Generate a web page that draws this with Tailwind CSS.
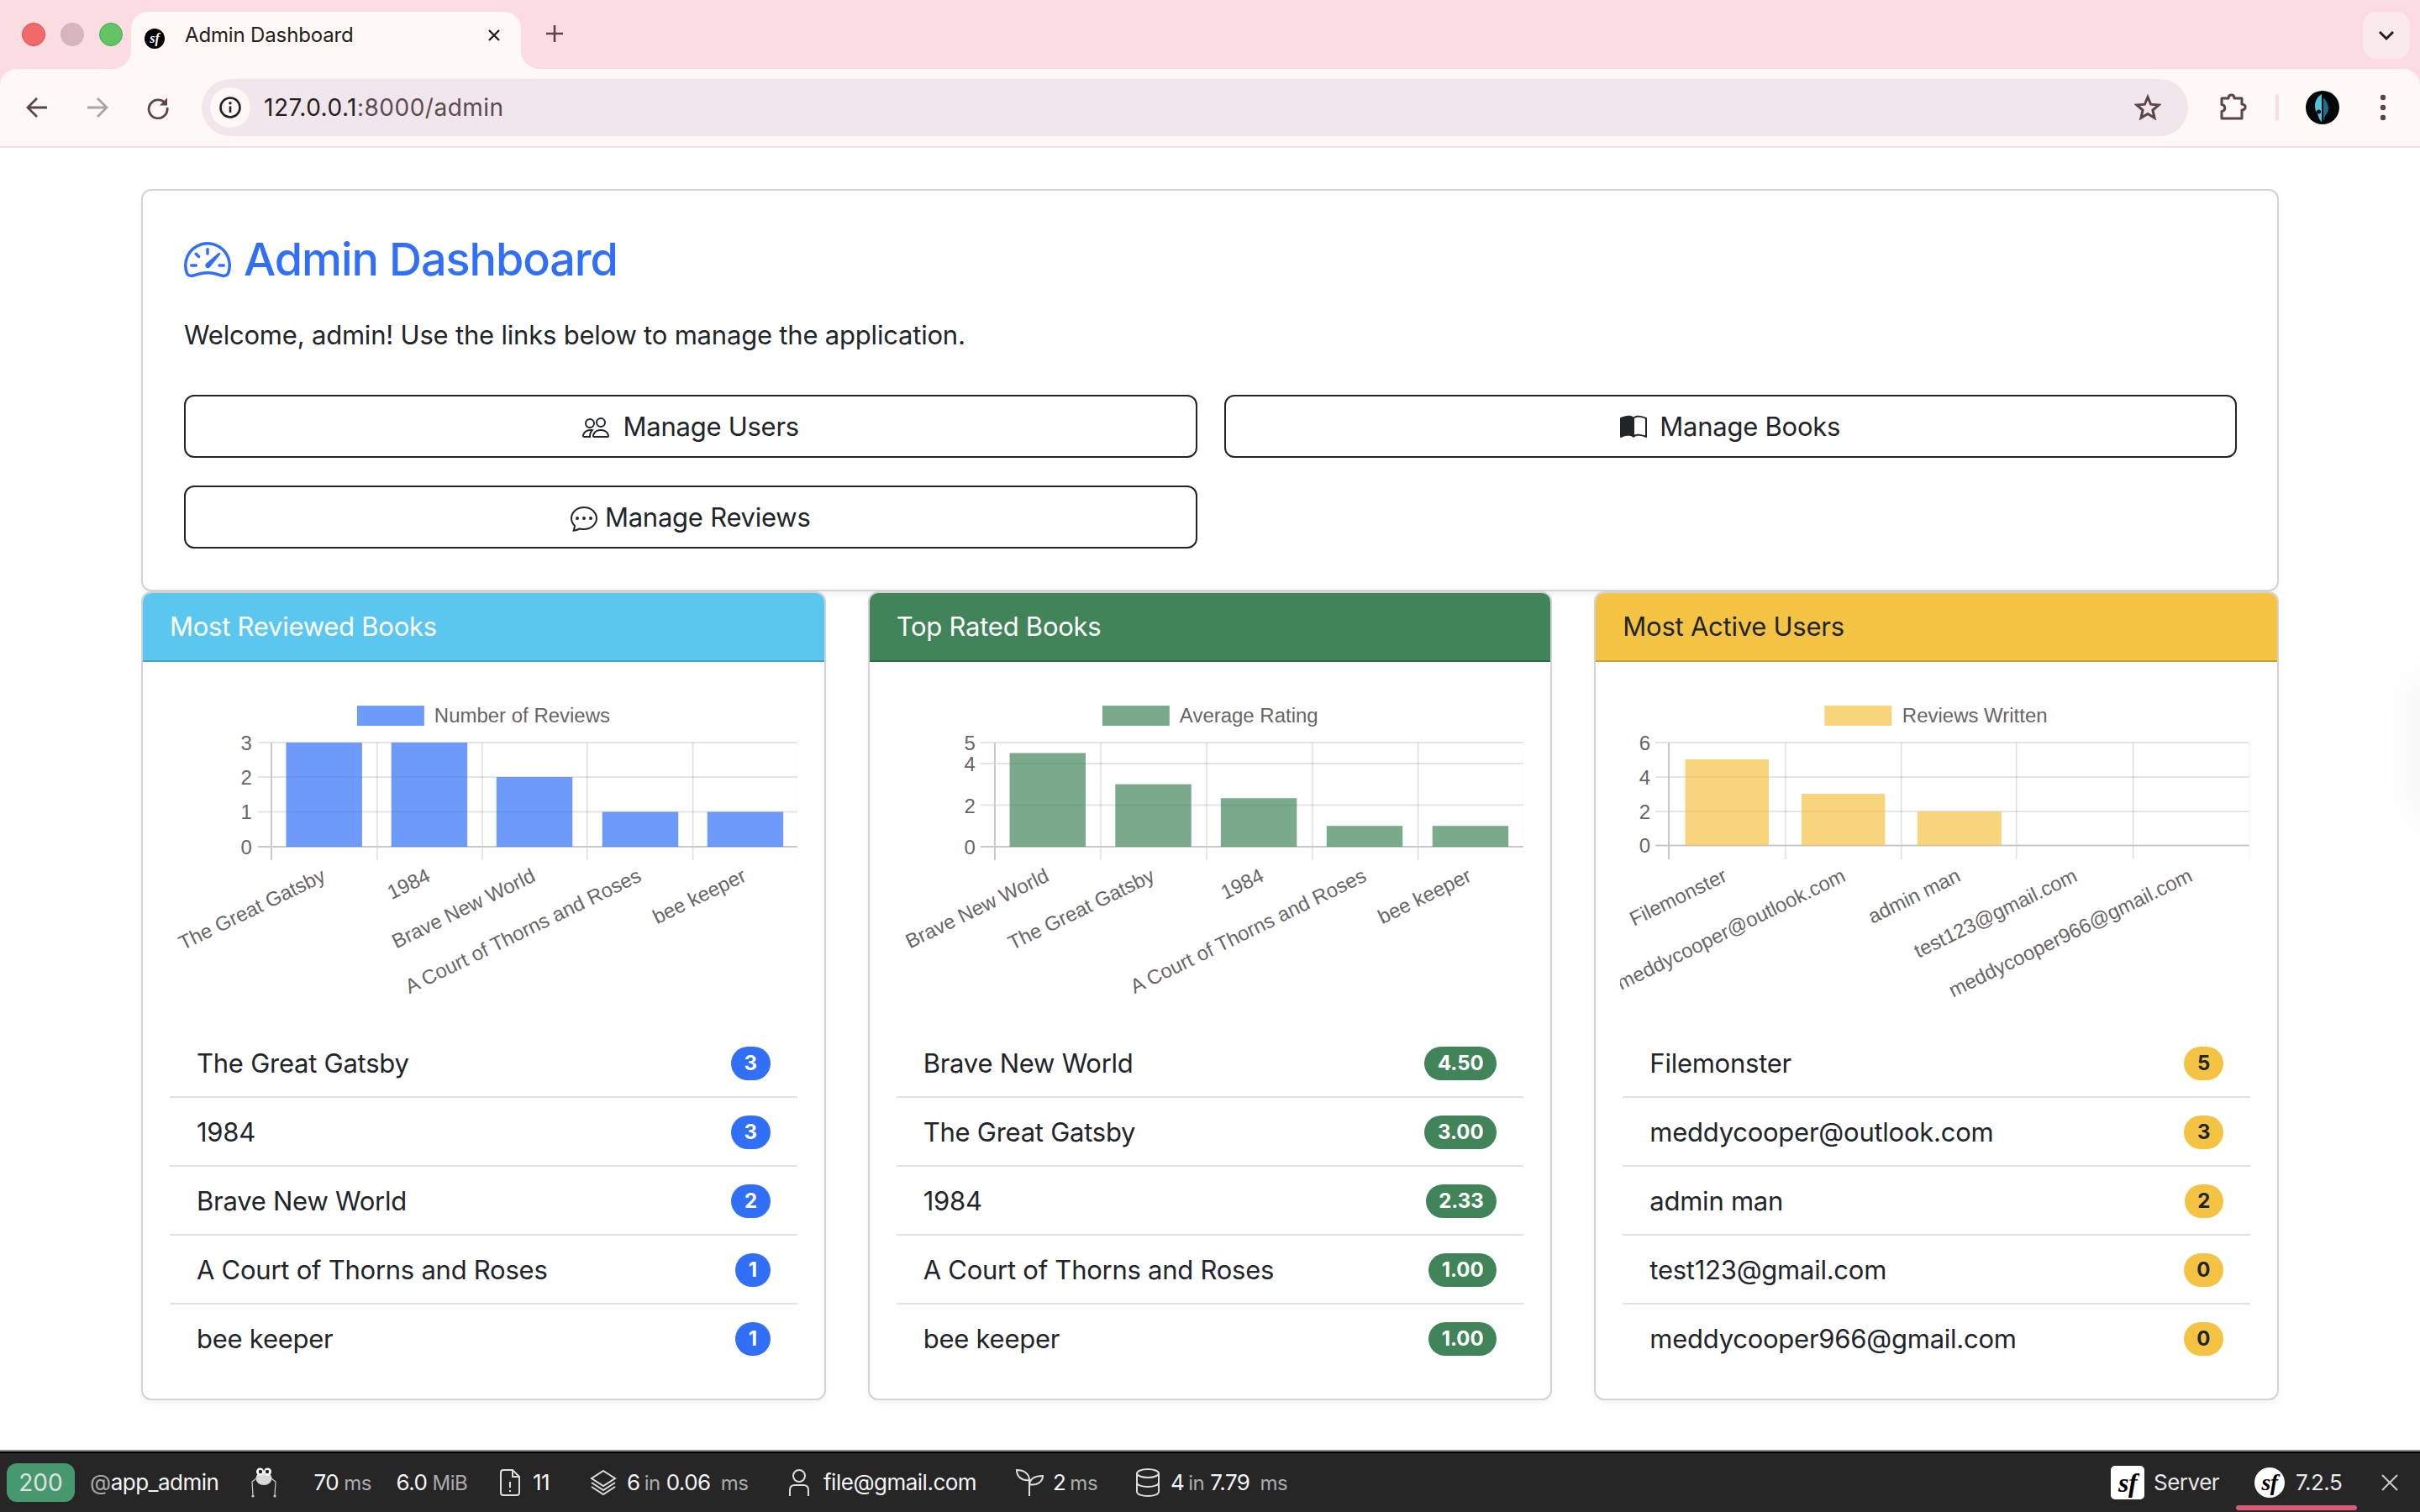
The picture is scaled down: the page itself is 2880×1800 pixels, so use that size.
<!DOCTYPE html>
<html lang="en">
<head>
<meta charset="utf-8">
<title>Admin Dashboard</title>
<script src="https://cdn.jsdelivr.net/npm/@tailwindcss/browser@4"></script>
</head>
<body class="m-0 bg-white">
<div class="relative flex h-[1800px] w-[2880px] flex-col overflow-hidden bg-white font-['Inter','Liberation_Sans',sans-serif] text-[#212529]">

  <!-- Browser chrome -->
  <header class="h-[176px] shrink-0 bg-[#fadce1]">
    <div class="flex h-[82px] items-start">
      <div class="ml-[26px] mt-[27px] flex gap-[18px]">
        <span class="h-[28px] w-[28px] rounded-full border border-[#e5484d] bg-[#f2696a]"></span>
        <span class="h-[28px] w-[28px] rounded-full bg-[#d6b6bb]"></span>
        <span class="h-[28px] w-[28px] rounded-full border border-[#3dab49] bg-[#63c466]"></span>
      </div>
      <div class="relative ml-[10px] mt-[14px] flex h-[68px] w-[464px] items-center rounded-t-[20px] bg-[#fff8f5] pb-[12px]">
        <svg class="absolute bottom-0 left-[-22px]" width="22" height="22" viewBox="0 0 22 22"><path d="M22 0V22H0C12 22 22 12 22 0Z" fill="#fff8f5"/></svg>
        <svg class="absolute bottom-0 right-[-22px]" width="22" height="22" viewBox="0 0 22 22"><path d="M0 0V22H22C10 22 0 12 0 0Z" fill="#fff8f5"/></svg>
        <span class="ml-[16px] mt-[8px] flex h-[24px] w-[24px] items-center justify-center rounded-full bg-black font-['Liberation_Serif',serif] text-[16px] font-bold italic leading-none text-white">sf</span>
        <span class="ml-[24px] text-[24px] leading-none tracking-[-0.15px] text-[#231f20]">Admin Dashboard</span>
        <svg class="ml-auto mr-[24px]" width="16" height="16" viewBox="0 0 16 16"><path d="M2 2L14 14M14 2L2 14" stroke="#231f20" stroke-width="2.4" fill="none"/></svg>
      </div>
      <svg class="ml-[28px] mt-[28px]" width="24" height="24" viewBox="0 0 24 24"><path d="M12 2V22M2 12H22" stroke="#5b444a" stroke-width="2.6" fill="none"/></svg>
      <div class="ml-auto mr-[12px] mt-[14px] flex h-[56px] w-[56px] items-center justify-center rounded-[16px] bg-[#fbeaec]">
        <svg width="20" height="14" viewBox="0 0 20 14"><path d="M2 3L10 11L18 3" stroke="#231f20" stroke-width="3" fill="none"/></svg>
      </div>
    </div>
    <div class="flex h-[94px] items-center rounded-t-[20px] border-b-2 border-[#f5dfe2] bg-[#fff8f5]">
      <svg class="ml-[30px]" width="28" height="28" viewBox="0 0 28 28"><path d="M26 14H4M14 3L3 14L14 25" stroke="#5b444a" stroke-width="2.8" fill="none"/></svg>
      <svg class="ml-[44px]" width="28" height="28" viewBox="0 0 28 28"><path d="M2 14H24M14 3L25 14L14 25" stroke="#aea3a5" stroke-width="2.8" fill="none"/></svg>
      <svg class="ml-[44px]" width="28" height="28" viewBox="0 0 28 28"><path d="M23.5 10A11 11 0 1 0 25 14" stroke="#5b444a" stroke-width="2.8" fill="none"/><path d="M25 2.5V11.5H16Z" fill="#5b444a"/></svg>
      <div class="ml-[38px] flex h-[68px] w-[2364px] items-center rounded-full bg-[#f0e6eb]">
        <span class="ml-[10px] flex h-[48px] w-[48px] items-center justify-center rounded-full bg-[#fff8f5]">
          <svg width="28" height="28" viewBox="0 0 28 28"><circle cx="14" cy="14" r="11.5" stroke="#231f20" stroke-width="2.6" fill="none"/><circle cx="14" cy="8.8" r="1.7" fill="#231f20"/><path d="M14 12.5V20" stroke="#231f20" stroke-width="2.6"/></svg>
        </span>
        <span class="ml-[16px] text-[28px] leading-none tracking-[0.5px] text-[#231f20]">127.0.0.1<span class="text-[#5b4c51]">:8000/admin</span></span>
        <svg class="ml-auto mr-[32px]" width="32" height="32" viewBox="0 0 32 32"><path d="M16 3.5L19.6 12.2L29 13L21.9 19.1L24 28.3L16 23.4L8 28.3L10.1 19.1L3 13L12.4 12.2Z" stroke="#5b444a" stroke-width="3" fill="none"/></svg>
      </div>
      <svg class="ml-[36px]" width="34" height="34" viewBox="0 0 34 34"><path d="M4 6H12C12 0.500 19 0.500 19 6H28V13C33.500 13 33.500 20 28 20V30H4V21.500C9 21.500 9 13.500 4 13.500Z" stroke="#5b444a" stroke-width="3" fill="none" stroke-linejoin="round"/></svg>
      <span class="ml-[34px] h-[32px] w-[4px] rounded-full bg-[#fadce1]"></span>
      <svg class="ml-[32px]" width="40" height="40" viewBox="0 0 40 40"><circle cx="20" cy="20" r="20" fill="#03070a"/><path d="M19 4C14 7 11 12 11 18C11 22 12 25 14 27C15 31 17 36 19 37Z" fill="#4fc3dc"/><path d="M21 8C24 12 27 16 27 21C27 25 25 28 23 30C22 33 22 35 21 36Z" fill="#1f6d86"/><circle cx="15.500" cy="25" r="2.500" fill="#03070a"/></svg>
      <svg class="ml-[46px]" width="12" height="36" viewBox="0 0 12 36"><circle cx="6" cy="6" r="3.200" fill="#5b444a"/><circle cx="6" cy="18" r="3.200" fill="#5b444a"/><circle cx="6" cy="30" r="3.200" fill="#5b444a"/></svg>
    </div>
  </header>

  <!-- Page -->
  <main class="relative flex-1 px-[168px] pt-[49px]">
    <section class="h-[479px] rounded-[12px] border-2 border-[#d3d3d3] bg-white pl-[49px] pr-[48px] pt-[48px] shadow-[0_4px_8px_rgba(0,0,0,0.05)]">
      <h1 class="flex h-[68px] items-center gap-[15px] text-[54px] font-medium leading-none tracking-[-1.1px] text-[#316ff6]">
        <svg width="56" height="56" viewBox="0 0 16 16" fill="currentColor"><path d="M8 4a.5.5 0 0 1 .5.5V6a.5.5 0 0 1-1 0V4.500A.5.5 0 0 1 8 4M3.732 5.732a.5.5 0 0 1 .707 0l.915.914a.5.5 0 1 1-.708.708l-.914-.915a.5.5 0 0 1 0-.707M2 10a.5.5 0 0 1 .5-.5h1.586a.5.5 0 0 1 0 1H2.500A.5.5 0 0 1 2 10m9.500 0a.5.5 0 0 1 .5-.5h1.500a.5.5 0 0 1 0 1H12a.5.5 0 0 1-.5-.5m.754-4.246a.39.39 0 0 0-.527-.02L7.547 9.310a.91.91 0 1 0 1.302 1.258l3.434-4.297a.39.39 0 0 0-.029-.518z"/><path fill-rule="evenodd" d="M0 10a8 8 0 1 1 15.547 2.661c-.442 1.253-1.845 1.602-2.932 1.250C11.309 13.488 9.475 13 8 13c-1.474 0-3.310.488-4.615.911-1.087.352-2.490.003-2.932-1.250A8 8 0 0 1 0 10m8-7a7 7 0 0 0-6.603 9.329c.203.575.923.876 1.680.630C4.397 12.533 6.358 12 8 12s3.604.532 4.923.96c.757.245 1.477-.056 1.680-.631A7 7 0 0 0 8 3"/></svg>
        Admin Dashboard
      </h1>
      <p class="mt-[32px] text-[31px] leading-[48px] tracking-[-0.2px]">Welcome, admin! Use the links below to manage the application.</p>
      <div class="mt-[47px] grid grid-cols-2 gap-x-[32px] gap-y-[33px] text-[31px] tracking-[-0.25px]">
        <a class="flex h-[75px] items-center justify-center gap-[17px] rounded-[12px] border-2 border-[#212529] pt-[2px]">
          <svg width="32" height="32" viewBox="0 0 16 16" fill="currentColor"><path d="M15 14s1 0 1-1-1-4-5-4-5 3-5 4 1 1 1 1zm-7.978-1L7 12.996c.001-.264.167-1.030.76-1.720C8.312 10.629 9.282 10 11 10c1.717 0 2.687.630 3.240 1.276.593.690.758 1.457.76 1.720l-.008.002-.014.002zM11 7a2 2 0 1 0 0-4 2 2 0 0 0 0 4m3-2a3 3 0 1 1-6 0 3 3 0 0 1 6 0M6.936 9.280a6 6 0 0 0-1.230-.247A7 7 0 0 0 5 9c-4 0-5 3-5 4q0 1 1 1h4.216A2.240 2.240 0 0 1 5 13c0-1.010.377-2.042 1.090-2.904.243-.294.526-.569.846-.816M4.920 10A5.500 5.500 0 0 0 4 13H1c0-.26.164-1.030.76-1.724.545-.636 1.492-1.256 3.160-1.275ZM1.500 5.500a3 3 0 1 1 6 0 3 3 0 0 1-6 0m3-2a2 2 0 1 0 0 4 2 2 0 0 0 0-4"/></svg>
          Manage Users
        </a>
        <a class="flex h-[75px] items-center justify-center gap-[15px] rounded-[12px] border-2 border-[#212529] pt-[2px]">
          <svg width="32" height="32" viewBox="0 0 16 16" fill="currentColor"><path d="M8.500 2.687c.654-.689 1.782-.886 3.112-.752 1.234.124 2.503.523 3.388.893v9.923c-.918-.35-2.107-.692-3.287-.81-1.094-.111-2.278-.039-3.213.492zM8 1.783C7.015.936 5.587.81 4.287.94c-1.514.153-3.042.672-3.994 1.105A.5.5 0 0 0 0 2.500v11a.5.5 0 0 0 .707.455c.882-.4 2.303-.881 3.680-1.020 1.409-.142 2.590.087 3.223.877a.5.5 0 0 0 .78 0c.633-.79 1.814-1.019 3.222-.877 1.378.139 2.800.620 3.681 1.020A.5.5 0 0 0 16 13.500v-11a.5.5 0 0 0-.293-.455c-.952-.433-2.480-.952-3.994-1.105C10.413.809 8.985.936 8 1.783"/></svg>
          Manage Books
        </a>
        <a class="flex h-[75px] items-center justify-center gap-[9px] rounded-[12px] border-2 border-[#212529] pt-[2px]">
          <svg width="32" height="32" viewBox="0 0 16 16" fill="currentColor"><path d="M5 8a1 1 0 1 1-2 0 1 1 0 0 1 2 0m4 0a1 1 0 1 1-2 0 1 1 0 0 1 2 0m3 1a1 1 0 1 0 0-2 1 1 0 0 0 0 2"/><path d="m2.165 15.803.02-.004c1.830-.363 2.948-.842 3.468-1.105A9 9 0 0 0 8 15c4.418 0 8-3.134 8-7s-3.582-7-8-7-8 3.134-8 7c0 1.760.743 3.370 1.970 4.600a10.400 10.400 0 0 1-.524 2.318l-.003.011a11 11 0 0 1-.244.637c-.079.186.074.394.273.362a22 22 0 0 0 .693-.125m.8-3.108a1 1 0 0 0-.287-.801C1.618 10.830 1 9.468 1 8c0-3.192 3.004-6 7-6s7 2.808 7 6-3.004 6-7 6a8 8 0 0 1-2.088-.272 1 1 0 0 0-.711.074c-.387.196-1.240.570-2.634.893a11 11 0 0 0 .398-2"/></svg>
          Manage Reviews
        </a>
      </div>
    </section>

    <div class="grid grid-cols-3 gap-x-[50px]">
      <!-- Card 1 -->
      <article class="h-[963px] overflow-hidden rounded-[12px] border-2 border-[#d3d3d3] bg-white shadow-[0_4px_8px_rgba(0,0,0,0.05)]">
        <div class="flex h-[82px] items-center border-b-2 border-[#4aa2c2] bg-[#5bc7ee] px-[32px] text-[31px] tracking-[-0.25px] text-white">Most Reviewed Books</div>
        <div class="px-[32px] pt-[32px]">
          <svg class="block w-full" height="374" viewBox="202 820 747 374" font-family="Liberation Sans" font-size="24" fill="#666">
            <rect x="425" y="840" width="80" height="24" fill="#316ff6" fill-opacity="0.7"/>
            <text x="517" y="860">Number of Reviews</text>
            <g stroke="#000" stroke-opacity="0.1" stroke-width="2">
              <path d="M307 884H950M307 925H950M307 966.500H950"/>
              <path d="M449 884V1024M574 884V1024M699 884V1024M825 884V1024"/>
            </g>
            <path d="M949.500 884V1024" stroke="#000" stroke-opacity="0.06" stroke-width="1"/>
            <path d="M323 884V1024" stroke="#c8c8c8" stroke-width="2"/>
            <path d="M307 1008H950" stroke="#c8c8c8" stroke-width="2"/>
            <g fill="#316ff6" fill-opacity="0.7">
              <rect x="340.500" y="884" width="90.500" height="124"/>
              <rect x="465.800" y="884" width="90.500" height="124"/>
              <rect x="591" y="925" width="90.500" height="83"/>
              <rect x="717" y="966.500" width="90.500" height="41.500"/>
              <rect x="842" y="966.500" width="90.500" height="41.500"/>
            </g>
            <g text-anchor="end">
              <text x="300" y="893">3</text><text x="300" y="934">2</text><text x="300" y="975">1</text><text x="300" y="1017">0</text>
              <text transform="translate(389 1048) rotate(-26)">The Great Gatsby</text>
              <text transform="translate(514 1048) rotate(-26)">1984</text>
              <text transform="translate(639 1048) rotate(-26)">Brave New World</text>
              <text transform="translate(765 1048) rotate(-26)">A Court of Thorns and Roses</text>
              <text transform="translate(890 1048) rotate(-26)">bee keeper</text>
            </g>
          </svg>
          <ul class="mt-[31px] text-[31px] tracking-[-0.25px]">
            <li class="flex h-[82px] items-center justify-between border-b-2 border-[#dee2e6] pl-[32px] pr-[32px] pt-[2px]">The Great Gatsby<span class="rounded-full bg-[#316ff6] px-[15.600px] py-[8.400px] text-[24px] font-bold leading-[24px] tracking-normal text-white">3</span></li>
            <li class="flex h-[82px] items-center justify-between border-b-2 border-[#dee2e6] pl-[32px] pr-[32px] pt-[2px]">1984<span class="rounded-full bg-[#316ff6] px-[15.600px] py-[8.400px] text-[24px] font-bold leading-[24px] tracking-normal text-white">3</span></li>
            <li class="flex h-[82px] items-center justify-between border-b-2 border-[#dee2e6] pl-[32px] pr-[32px] pt-[2px]">Brave New World<span class="rounded-full bg-[#316ff6] px-[15.600px] py-[8.400px] text-[24px] font-bold leading-[24px] tracking-normal text-white">2</span></li>
            <li class="flex h-[82px] items-center justify-between border-b-2 border-[#dee2e6] pl-[32px] pr-[32px] pt-[2px]">A Court of Thorns and Roses<span class="rounded-full bg-[#316ff6] px-[15.600px] py-[8.400px] text-[24px] font-bold leading-[24px] tracking-normal text-white">1</span></li>
            <li class="flex h-[82px] items-center justify-between pl-[32px] pr-[32px]">bee keeper<span class="rounded-full bg-[#316ff6] px-[15.600px] py-[8.400px] text-[24px] font-bold leading-[24px] tracking-normal text-white">1</span></li>
          </ul>
        </div>
      </article>

      <!-- Card 2 -->
      <article class="h-[963px] overflow-hidden rounded-[12px] border-2 border-[#d3d3d3] bg-white shadow-[0_4px_8px_rgba(0,0,0,0.05)]">
        <div class="flex h-[82px] items-center border-b-2 border-[#316a48] bg-[#41845a] px-[32px] text-[31px] tracking-[-0.25px] text-white">Top Rated Books</div>
        <div class="px-[32px] pt-[32px]">
          <svg class="block w-full" height="374" viewBox="1067 820 747 374" font-family="Liberation Sans" font-size="24" fill="#666">
            <rect x="1312" y="840" width="80" height="24" fill="#41845a" fill-opacity="0.7"/>
            <text x="1404" y="860">Average Rating</text>
            <g stroke="#000" stroke-opacity="0.1" stroke-width="2">
              <path d="M1167 884H1813M1167 909H1813M1167 958.500H1813"/>
              <path d="M1310 884V1024M1436 884V1024M1562 884V1024M1688 884V1024"/>
            </g>
            <path d="M1813.500 884V1024" stroke="#000" stroke-opacity="0.06" stroke-width="1"/>
            <path d="M1184 884V1024" stroke="#c8c8c8" stroke-width="2"/>
            <path d="M1167 1008H1813" stroke="#c8c8c8" stroke-width="2"/>
            <g fill="#41845a" fill-opacity="0.7">
              <rect x="1201.600" y="896.400" width="90.500" height="111.600"/>
              <rect x="1327.400" y="933.600" width="90.500" height="74.400"/>
              <rect x="1453" y="950.200" width="90.500" height="57.800"/>
              <rect x="1579" y="983.200" width="90.500" height="24.800"/>
              <rect x="1705" y="983.200" width="90.500" height="24.800"/>
            </g>
            <g text-anchor="end">
              <text x="1161" y="893">5</text><text x="1161" y="918">4</text><text x="1161" y="967.500">2</text><text x="1161" y="1017">0</text>
              <text transform="translate(1250 1048) rotate(-26)">Brave New World</text>
              <text transform="translate(1376 1048) rotate(-26)">The Great Gatsby</text>
              <text transform="translate(1506 1048) rotate(-26)">1984</text>
              <text transform="translate(1628 1048) rotate(-26)">A Court of Thorns and Roses</text>
              <text transform="translate(1753 1048) rotate(-26)">bee keeper</text>
            </g>
          </svg>
          <ul class="mt-[31px] text-[31px] tracking-[-0.25px]">
            <li class="flex h-[82px] items-center justify-between border-b-2 border-[#dee2e6] pl-[32px] pr-[32px] pt-[2px]">Brave New World<span class="rounded-full bg-[#41845a] px-[15.600px] py-[8.400px] text-[24px] font-bold leading-[24px] tracking-normal text-white">4.50</span></li>
            <li class="flex h-[82px] items-center justify-between border-b-2 border-[#dee2e6] pl-[32px] pr-[32px] pt-[2px]">The Great Gatsby<span class="rounded-full bg-[#41845a] px-[15.600px] py-[8.400px] text-[24px] font-bold leading-[24px] tracking-normal text-white">3.00</span></li>
            <li class="flex h-[82px] items-center justify-between border-b-2 border-[#dee2e6] pl-[32px] pr-[32px] pt-[2px]">1984<span class="rounded-full bg-[#41845a] px-[15.600px] py-[8.400px] text-[24px] font-bold leading-[24px] tracking-normal text-white">2.33</span></li>
            <li class="flex h-[82px] items-center justify-between border-b-2 border-[#dee2e6] pl-[32px] pr-[32px] pt-[2px]">A Court of Thorns and Roses<span class="rounded-full bg-[#41845a] px-[15.600px] py-[8.400px] text-[24px] font-bold leading-[24px] tracking-normal text-white">1.00</span></li>
            <li class="flex h-[82px] items-center justify-between pl-[32px] pr-[32px]">bee keeper<span class="rounded-full bg-[#41845a] px-[15.600px] py-[8.400px] text-[24px] font-bold leading-[24px] tracking-normal text-white">1.00</span></li>
          </ul>
        </div>
      </article>

      <!-- Card 3 -->
      <article class="h-[963px] overflow-hidden rounded-[12px] border-2 border-[#d3d3d3] bg-white shadow-[0_4px_8px_rgba(0,0,0,0.05)]">
        <div class="flex h-[82px] items-center border-b-2 border-[#cc9f34] bg-[#f5c344] px-[32px] text-[31px] tracking-[-0.25px] text-[#212529]">Most Active Users</div>
        <div class="px-[32px] pt-[32px]">
          <svg class="block w-full overflow-visible" height="374" viewBox="1931 820 747 374" font-family="Liberation Sans" font-size="24" fill="#666">
            <defs><clipPath id="c3"><rect x="1928" y="820" width="760" height="374"/></clipPath></defs>
            <rect x="2171.500" y="840" width="80" height="24" fill="#f5c344" fill-opacity="0.7"/>
            <text x="2264" y="860">Reviews Written</text>
            <g stroke="#000" stroke-opacity="0.1" stroke-width="2">
              <path d="M1970 884H2677M1970 925H2677M1970 966H2677"/>
              <path d="M2125 884V1023M2263 884V1023M2400 884V1023M2539 884V1023"/>
            </g>
            <path d="M2677.500 884V1023" stroke="#000" stroke-opacity="0.06" stroke-width="1"/>
            <path d="M1986 884V1023" stroke="#c8c8c8" stroke-width="2"/>
            <path d="M1970 1006.500H2677" stroke="#c8c8c8" stroke-width="2"/>
            <g fill="#f5c344" fill-opacity="0.7">
              <rect x="2005.600" y="904" width="99.500" height="102.500"/>
              <rect x="2144" y="945" width="99.500" height="61.500"/>
              <rect x="2282" y="966" width="100" height="40.500"/>
            </g>
            <g text-anchor="end" clip-path="url(#c3)">
              <text x="1964" y="893">6</text><text x="1964" y="934">4</text><text x="1964" y="975">2</text><text x="1964" y="1015.500">0</text>
              <text transform="translate(2057 1048) rotate(-26)">Filemonster</text>
              <text transform="translate(2198 1048) rotate(-26)">meddycooper@outlook.com</text>
              <text transform="translate(2335 1048) rotate(-26)">admin man</text>
              <text transform="translate(2474 1048) rotate(-26)">test123@gmail.com</text>
              <text transform="translate(2611 1048) rotate(-26)">meddycooper966@gmail.com</text>
            </g>
          </svg>
          <ul class="mt-[31px] text-[31px] tracking-[-0.25px]">
            <li class="flex h-[82px] items-center justify-between border-b-2 border-[#dee2e6] pl-[32px] pr-[32px] pt-[2px]">Filemonster<span class="rounded-full bg-[#f5c344] px-[15.600px] py-[8.400px] text-[24px] font-bold leading-[24px] tracking-normal text-[#212529]">5</span></li>
            <li class="flex h-[82px] items-center justify-between border-b-2 border-[#dee2e6] pl-[32px] pr-[32px] pt-[2px]">meddycooper@outlook.com<span class="rounded-full bg-[#f5c344] px-[15.600px] py-[8.400px] text-[24px] font-bold leading-[24px] tracking-normal text-[#212529]">3</span></li>
            <li class="flex h-[82px] items-center justify-between border-b-2 border-[#dee2e6] pl-[32px] pr-[32px] pt-[2px]">admin man<span class="rounded-full bg-[#f5c344] px-[15.600px] py-[8.400px] text-[24px] font-bold leading-[24px] tracking-normal text-[#212529]">2</span></li>
            <li class="flex h-[82px] items-center justify-between border-b-2 border-[#dee2e6] pl-[32px] pr-[32px] pt-[2px]">test123@gmail.com<span class="rounded-full bg-[#f5c344] px-[15.600px] py-[8.400px] text-[24px] font-bold leading-[24px] tracking-normal text-[#212529]">0</span></li>
            <li class="flex h-[82px] items-center justify-between pl-[32px] pr-[32px]">meddycooper966@gmail.com<span class="rounded-full bg-[#f5c344] px-[15.600px] py-[8.400px] text-[24px] font-bold leading-[24px] tracking-normal text-[#212529]">0</span></li>
          </ul>
        </div>
      </article>
    </div>
    <div class="absolute right-[-12px] top-[630px] h-[170px] w-[12px] shadow-[0_0_50px_rgba(0,0,0,0.14)]"></div>
  </main>

  <!-- Symfony toolbar -->
  <footer class="h-[74px] shrink-0 border-t-2 border-[#888]">
    <div class="relative flex h-[72px] items-center border-t-2 border-black bg-[#262626] text-[26px] leading-none tracking-[-0.5px] text-[#f5f5f5] [&>*]:shrink-0">
      <span class="ml-[8px] flex h-[46px] w-[81px] items-center justify-center rounded-[12px] bg-[#46996f] text-[28px] tracking-normal text-[#e0e0e0]">200</span>
      <span class="ml-[18px] w-[189px]"><span class="text-[#aaa]">@</span>app_admin</span>
      <svg width="36" height="40" viewBox="0 0 36 40"><g fill="none" stroke="#ccc" stroke-width="1.200"><path d="M9 15L4 19L5 35M27 15L32 19L31 35"/></g><ellipse cx="18" cy="15" rx="9.500" ry="8" fill="#d8d8d8"/><circle cx="13.500" cy="7" r="4.500" fill="#fff"/><circle cx="22.500" cy="7" r="4.500" fill="#fff"/><circle cx="14" cy="7" r="2.200" fill="#222"/><circle cx="22" cy="7" r="2.200" fill="#222"/><circle cx="5" cy="36" r="1.600" fill="#ccc"/><circle cx="31" cy="36" r="1.600" fill="#ccc"/></svg>
      <span class="ml-[41.500px] w-[98px]">70<span class="ml-[6px] text-[24px] text-[#aaa]">ms</span></span>
      <span class="w-[122.500px]">6.0<span class="ml-[6px] text-[24px] text-[#aaa]">MiB</span></span>
      <svg width="26" height="34" viewBox="0 0 26 34" fill="none" stroke="#ddd" stroke-width="2"><path d="M2 5Q2 2 5 2H16L24 10V29Q24 32 21 32H5Q2 32 2 29Z"/><path d="M16 2V10H24M13 16V23M13 26V28"/></svg>
      <span class="ml-[14px] w-[68px]">11</span>
      <svg width="32" height="30" viewBox="0 0 32 30" fill="none" stroke="#ddd" stroke-width="2"><path d="M16 1L30 10L16 19L2 10Z"/><path d="M2 15L16 24L30 15M2 20L16 29L30 20"/></svg>
      <span class="ml-[12px] w-[191px]">6<span class="ml-[5px] text-[24px] text-[#aaa]">in</span><span class="ml-[7px]">0.06</span><span class="ml-[12px] text-[24px] text-[#aaa]">ms</span></span>
      <svg width="28" height="34" viewBox="0 0 28 34" fill="none" stroke="#ddd" stroke-width="2"><circle cx="14" cy="9" r="7"/><path d="M3 33V26Q3 20 9 20H19Q25 20 25 26V33"/></svg>
      <span class="ml-[15px] w-[228px]">file@gmail.com</span>
      <svg width="34" height="34" viewBox="0 0 34 34" fill="none" stroke="#ddd" stroke-width="2"><path d="M17 33V14M17 14C17 6 10 2 2 2C2 10 8 15 17 14M17 19C18 12 24 9 33 9C33 16 26 21 17 19"/></svg>
      <span class="ml-[11px] w-[98px]">2<span class="ml-[5px] text-[24px] text-[#aaa]">ms</span></span>
      <svg width="30" height="34" viewBox="0 0 30 34" fill="none" stroke="#ddd" stroke-width="2"><ellipse cx="15" cy="6" rx="13" ry="5"/><path d="M2 6V28C2 31 8 33 15 33S28 31 28 28V6M2 17C2 20 8 22 15 22S28 20 28 17"/></svg>
      <span class="ml-[12px]">4<span class="ml-[5px] text-[24px] text-[#aaa]">in</span><span class="ml-[7px]">7.79</span><span class="ml-[12px] text-[24px] text-[#aaa]">ms</span></span>

      <span class="ml-auto flex h-[40px] w-[40px] items-center justify-center rounded-[5px] bg-white font-['Liberation_Serif',serif] text-[32px] font-bold italic leading-none text-black">sf</span>
      <span class="ml-[11px] w-[120px] text-[#e8e8e8]">Server</span>
      <span class="flex h-[36px] w-[36px] items-center justify-center rounded-full bg-white font-['Liberation_Serif',serif] text-[28px] font-bold italic leading-none text-black">sf</span>
      <span class="ml-[13px] w-[102px] text-[#e8e8e8]">7.2.5</span>
      <svg class="mr-[26px]" width="20" height="20" viewBox="0 0 20 20"><path d="M1 1L19 19M19 1L1 19" stroke="#ccc" stroke-width="2" fill="none"/></svg>
      <span class="absolute bottom-[2px] right-[75px] h-[6px] w-[144px] rounded-full bg-[#d75b75]"></span>
    </div>
  </footer>
</div>
</body>
</html>
